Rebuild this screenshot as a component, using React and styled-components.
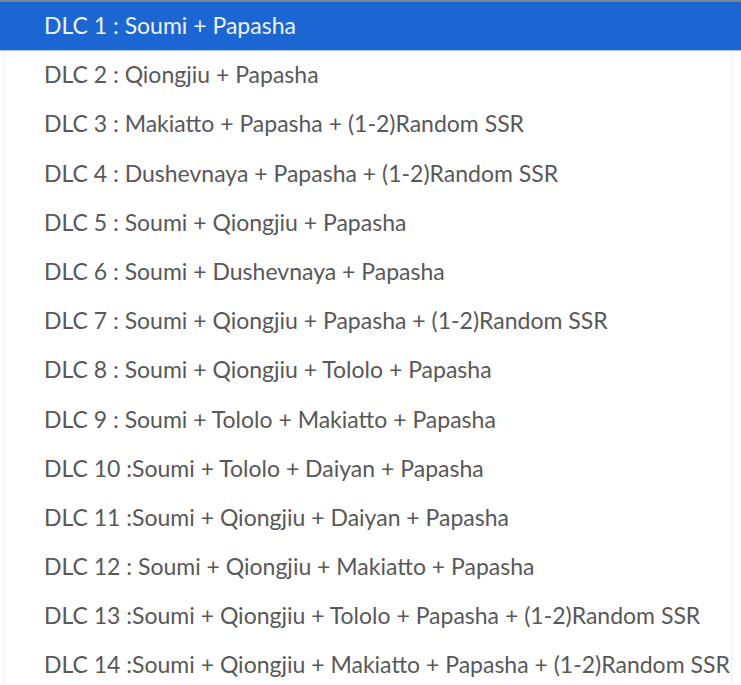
import React from 'react';
import styled, { createGlobalStyle } from 'styled-components';

const Global = createGlobalStyle`
  html, body { margin: 0; padding: 0; background: #fff; }
`;

const options = [
  'DLC 1 : Soumi + Papasha',
  'DLC 2 : Qiongjiu + Papasha',
  'DLC 3 : Makiatto + Papasha + (1-2)Random SSR',
  'DLC 4 : Dushevnaya + Papasha + (1-2)Random SSR',
  'DLC 5 : Soumi + Qiongjiu + Papasha',
  'DLC 6 : Soumi + Dushevnaya + Papasha',
  'DLC 7 : Soumi + Qiongjiu + Papasha + (1-2)Random SSR',
  'DLC 8 : Soumi + Qiongjiu + Tololo + Papasha',
  'DLC 9 : Soumi + Tololo + Makiatto + Papasha',
  'DLC 10 :Soumi + Tololo + Daiyan + Papasha',
  'DLC 11 :Soumi + Qiongjiu + Daiyan + Papasha',
  'DLC 12 : Soumi + Qiongjiu + Makiatto + Papasha',
  'DLC 13 :Soumi + Qiongjiu + Tololo + Papasha + (1-2)Random SSR',
  'DLC 14 :Soumi + Qiongjiu + Makiatto + Papasha + (1-2)Random SSR',
];

const Dropdown = styled.ul`
  list-style: none;
  margin: 0;
  padding: 0;
  width: 741px;
  height: 685px;
  overflow: hidden;
  border-top: 2px solid #7d8593;
  box-sizing: border-box;
  background: linear-gradient(
    to right,
    transparent 4px,
    #f1f1f1 4px,
    #f1f1f1 5px,
    transparent 5px,
    transparent 731px,
    #f1f1f1 731px,
    #f1f1f1 732px,
    transparent 732px
  );
  font-family: Lato, "Open Sans", sans-serif;
`;

const Option = styled.li`
  height: 49.2px;
  line-height: 47px;
  padding-left: 44px;
  font-size: 23px;
  white-space: nowrap;
  color: ${p => (p.$selected ? '#eef4ff' : '#585858')};
  background: ${p => (p.$selected ? '#1c66d3' : 'transparent')};
  border-bottom: ${p => (p.$selected ? '1px solid #a9c6ee' : 'none')};
  box-sizing: border-box;
`;

export default function App() {
  return (
    <>
      <Global />
      <Dropdown>
        {options.map((o, i) => (
          <Option key={o} $selected={i === 0}>{o}</Option>
        ))}
      </Dropdown>
    </>
  );
}
